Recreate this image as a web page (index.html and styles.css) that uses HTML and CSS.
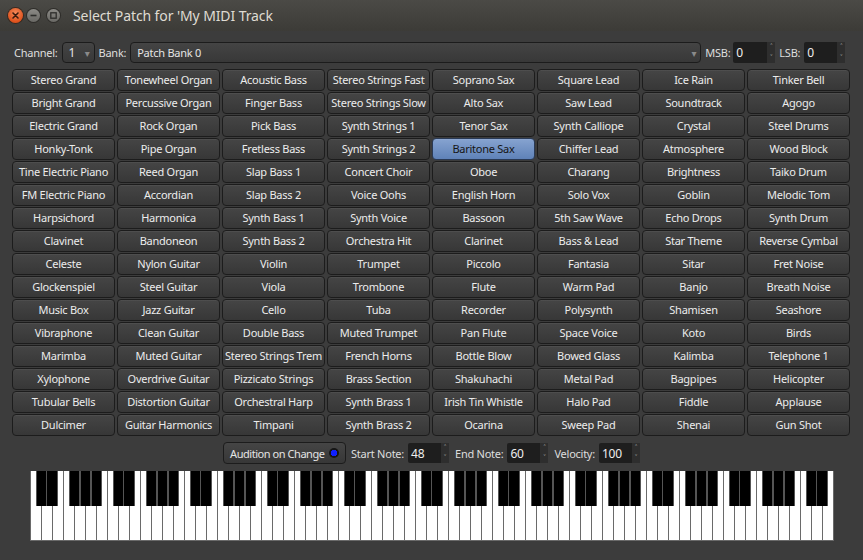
FILE: index.html
```html
<!DOCTYPE html>
<html>
<head>
<meta charset="utf-8">
<link rel="stylesheet" href="styles.css">
</head>
<body>
<div class="window">
  <div class="titlebar">
    <div class="wbtns">
      <span class="wbtn close"><svg width="15" height="15" viewBox="0 0 15 15"><path d="M5 5L10 10M10 5L5 10" stroke="#3a1a0e" stroke-width="1.6" stroke-linecap="round"/></svg></span>
      <span class="wbtn mini"><svg width="13" height="13" viewBox="0 0 13 13"><path d="M3.5 6.5H9.5" stroke="#2d2d2b" stroke-width="1.6"/></svg></span>
      <span class="wbtn maxi"><svg width="13" height="13" viewBox="0 0 13 13"><rect x="3.8" y="3.8" width="5.4" height="5.4" fill="none" stroke="#2d2d2b" stroke-width="1.3"/></svg></span>
    </div>
    <div class="title">Select Patch for 'My MIDI Track</div>
  </div>

  <div class="toprow">
    <span class="lbl">Channel:</span>
    <div class="combo chan"><span>1</span><span class="arrow">▾</span></div>
    <span class="lbl">Bank:</span>
    <div class="combo bank"><span>Patch Bank 0</span><span class="arrow">▾</span></div>
    <span class="lbl">MSB:</span>
    <div class="spin msb"><span class="val">0</span><span class="arrows"><i>˄</i><i>˅</i></span></div>
    <span class="lbl">LSB:</span>
    <div class="spin lsb"><span class="val">0</span><span class="arrows"><i>˄</i><i>˅</i></span></div>
  </div>

  <div class="grid">
    <button>Stereo Grand</button><button>Bright Grand</button><button>Electric Grand</button><button>Honky-Tonk</button><button>Tine Electric Piano</button><button>FM Electric Piano</button><button>Harpsichord</button><button>Clavinet</button><button>Celeste</button><button>Glockenspiel</button><button>Music Box</button><button>Vibraphone</button><button>Marimba</button><button>Xylophone</button><button>Tubular Bells</button><button>Dulcimer</button>
    <button>Tonewheel Organ</button><button>Percussive Organ</button><button>Rock Organ</button><button>Pipe Organ</button><button>Reed Organ</button><button>Accordian</button><button>Harmonica</button><button>Bandoneon</button><button>Nylon Guitar</button><button>Steel Guitar</button><button>Jazz Guitar</button><button>Clean Guitar</button><button>Muted Guitar</button><button>Overdrive Guitar</button><button>Distortion Guitar</button><button>Guitar Harmonics</button>
    <button>Acoustic Bass</button><button>Finger Bass</button><button>Pick Bass</button><button>Fretless Bass</button><button>Slap Bass 1</button><button>Slap Bass 2</button><button>Synth Bass 1</button><button>Synth Bass 2</button><button>Violin</button><button>Viola</button><button>Cello</button><button>Double Bass</button><button>Stereo Strings Trem</button><button>Pizzicato Strings</button><button>Orchestral Harp</button><button>Timpani</button>
    <button>Stereo Strings Fast</button><button>Stereo Strings Slow</button><button>Synth Strings 1</button><button>Synth Strings 2</button><button>Concert Choir</button><button>Voice Oohs</button><button>Synth Voice</button><button>Orchestra Hit</button><button>Trumpet</button><button>Trombone</button><button>Tuba</button><button>Muted Trumpet</button><button>French Horns</button><button>Brass Section</button><button>Synth Brass 1</button><button>Synth Brass 2</button>
    <button>Soprano Sax</button><button>Alto Sax</button><button>Tenor Sax</button><button class="sel">Baritone Sax</button><button>Oboe</button><button>English Horn</button><button>Bassoon</button><button>Clarinet</button><button>Piccolo</button><button>Flute</button><button>Recorder</button><button>Pan Flute</button><button>Bottle Blow</button><button>Shakuhachi</button><button>Irish Tin Whistle</button><button>Ocarina</button>
    <button>Square Lead</button><button>Saw Lead</button><button>Synth Calliope</button><button>Chiffer Lead</button><button>Charang</button><button>Solo Vox</button><button>5th Saw Wave</button><button>Bass &amp; Lead</button><button>Fantasia</button><button>Warm Pad</button><button>Polysynth</button><button>Space Voice</button><button>Bowed Glass</button><button>Metal Pad</button><button>Halo Pad</button><button>Sweep Pad</button>
    <button>Ice Rain</button><button>Soundtrack</button><button>Crystal</button><button>Atmosphere</button><button>Brightness</button><button>Goblin</button><button>Echo Drops</button><button>Star Theme</button><button>Sitar</button><button>Banjo</button><button>Shamisen</button><button>Koto</button><button>Kalimba</button><button>Bagpipes</button><button>Fiddle</button><button>Shenai</button>
    <button>Tinker Bell</button><button>Agogo</button><button>Steel Drums</button><button>Wood Block</button><button>Taiko Drum</button><button>Melodic Tom</button><button>Synth Drum</button><button>Reverse Cymbal</button><button>Fret Noise</button><button>Breath Noise</button><button>Seashore</button><button>Birds</button><button>Telephone 1</button><button>Helicopter</button><button>Applause</button><button>Gun Shot</button>
  </div>

  <div class="bottomrow">
    <div class="audition"><span>Audition on Change</span><span class="radio"></span></div>
    <span class="lbl">Start Note:</span>
    <div class="spin note"><span class="val">48</span><span class="arrows"><i>˄</i><i>˅</i></span></div>
    <span class="lbl">End Note:</span>
    <div class="spin note"><span class="val">60</span><span class="arrows"><i>˄</i><i>˅</i></span></div>
    <span class="lbl">Velocity:</span>
    <div class="spin note"><span class="val">100</span><span class="arrows"><i>˄</i><i>˅</i></span></div>
  </div>

  <div class="pianowrap"><div class="piano"></div></div>
</div>
</body>
</html>
```

FILE: styles.css
```css
* { box-sizing: border-box; }
html, body { margin: 0; padding: 0; }
body {
  width: 863px; height: 560px; overflow: hidden;
  background: #3c3c3c;
  font-family: "Noto Sans", "DejaVu Sans", sans-serif;
  font-size: 11px;
  letter-spacing: -0.25px;
  color: #e4e4e4;
}
.window { display: flex; flex-direction: column; height: 560px; }

.titlebar {
  height: 31px; flex: none;
  display: flex; align-items: center;
  background: linear-gradient(#4b4a46, #3c3b37);
  padding-left: 8px;
}
.wbtns { display: flex; align-items: center; }
.wbtn { display: flex; align-items: center; justify-content: center; border-radius: 50%; }
.wbtn.close { width: 15px; height: 15px; background: radial-gradient(circle at 50% 35%, #f58a5c, #e0521c 70%, #c8410f); box-shadow: 0 0 0 1px #3a2a20; }
.wbtn.mini, .wbtn.maxi { width: 13px; height: 13px; background: linear-gradient(#8b8a86, #6a6965); box-shadow: 0 0 0 1px #2e2d2a; }
.wbtns .mini { margin-left: 4px; }
.wbtns .maxi { margin-left: 7px; }
.title { margin-left: 13px; font-size: 14px; letter-spacing: -0.1px; color: #dfdbd2; }

.toprow {
  display: flex; align-items: center;
  height: 21px; margin-top: 11px;
  padding-left: 14px;
}
.lbl { color: #dedede; white-space: nowrap; }
.combo {
  height: 21px; display: flex; align-items: center; justify-content: space-between;
  border: 1px solid #1c1c1c; border-radius: 4px;
  background: linear-gradient(#444, #383838);
  padding: 0 4px 0 6px;
}
.combo .arrow { color: #8a8a8a; font-size: 10px; }
.chan { width: 33px; margin-left: 4px; margin-right: 4px; font-size: 12px; }
.bank { flex: none; width: 571px; margin-left: 4px; margin-right: 4px; }
.spin { height: 21px; display: flex; background: #1e1e1e; border-radius: 2px; }
.spin .val { flex: 1; padding-left: 3px; display: flex; align-items: center; font-size: 12px; color: #eee; }
.spin .arrows { width: 8px; display: flex; flex-direction: column; background: #2e2e2e; }
.spin .arrows i { flex: 1; font-style: normal; font-size: 8px; line-height: 10px; color: #aaa; text-align: center; }
.msb { width: 42px; margin-left: 3px; margin-right: 4px; }
.lsb { width: 41px; margin-left: 4px; }

.grid {
  margin-top: 6px; margin-left: 12px;
  display: grid;
  grid-auto-flow: column;
  grid-template-rows: repeat(16, 22px);
  grid-template-columns: repeat(8, 103px);
  column-gap: 2px; row-gap: 1px;
}
.grid button {
  font-family: inherit; font-size: 11px; letter-spacing: -0.25px; color: #ececec;
  border: 1px solid #1c1c1c; border-radius: 4px;
  background: linear-gradient(#454545, #373737);
  box-shadow: inset 0 1px 0 rgba(255,255,255,0.05);
  padding: 0; margin: 0; white-space: nowrap; line-height: 20px;
}
.grid button.sel {
  background: linear-gradient(#86a3d0, #5f82b8);
  color: #151515;
  border-color: #2a3a55;
}

.bottomrow {
  display: flex; align-items: center; justify-content: center;
  margin-top: 6px; height: 22px;
}
.audition {
  height: 22px; width: 123px; flex: none;
  display: flex; align-items: center; justify-content: space-between;
  border: 1px solid #1c1c1c; border-radius: 4px;
  background: linear-gradient(#454545, #373737);
  padding: 0 6px 0 6px;
  margin-right: 5px;
  white-space: nowrap;
  letter-spacing: -0.45px;
}
.radio {
  width: 10px; height: 10px; border-radius: 50%; flex: none;
  background: radial-gradient(circle, #1020ff 0 3px, #151515 3.5px);
}
.note { width: 41px; flex: none; margin-left: 4px; margin-right: 6px; height: 20px; }
.bottomrow .note:last-child { margin-right: 0; }

.pianowrap { display: flex; justify-content: center; margin-top: 7px; }
.piano {
  width: 804px; height: 70px;
  border-left: 1px solid #6a6a6a; border-bottom: 1px solid #6a6a6a;
  background:
    linear-gradient(to right,
      transparent 0 5px, #555 5px 6px, #000 6px 15px, #555 15px 16px, #000 16px 26px, #555 26px 27px,
      transparent 27px 38px, #555 38px 39px, #000 39px 48px, #555 48px 50px, #000 50px 59px, #555 59px 61px, #000 61px 70px, #555 70px 71px,
      transparent 71px 77px) 0 0 / 77px 35px repeat-x,
    repeating-linear-gradient(to right, #fff 0 10px, #6a6a6a 10px 11px);
}
```
